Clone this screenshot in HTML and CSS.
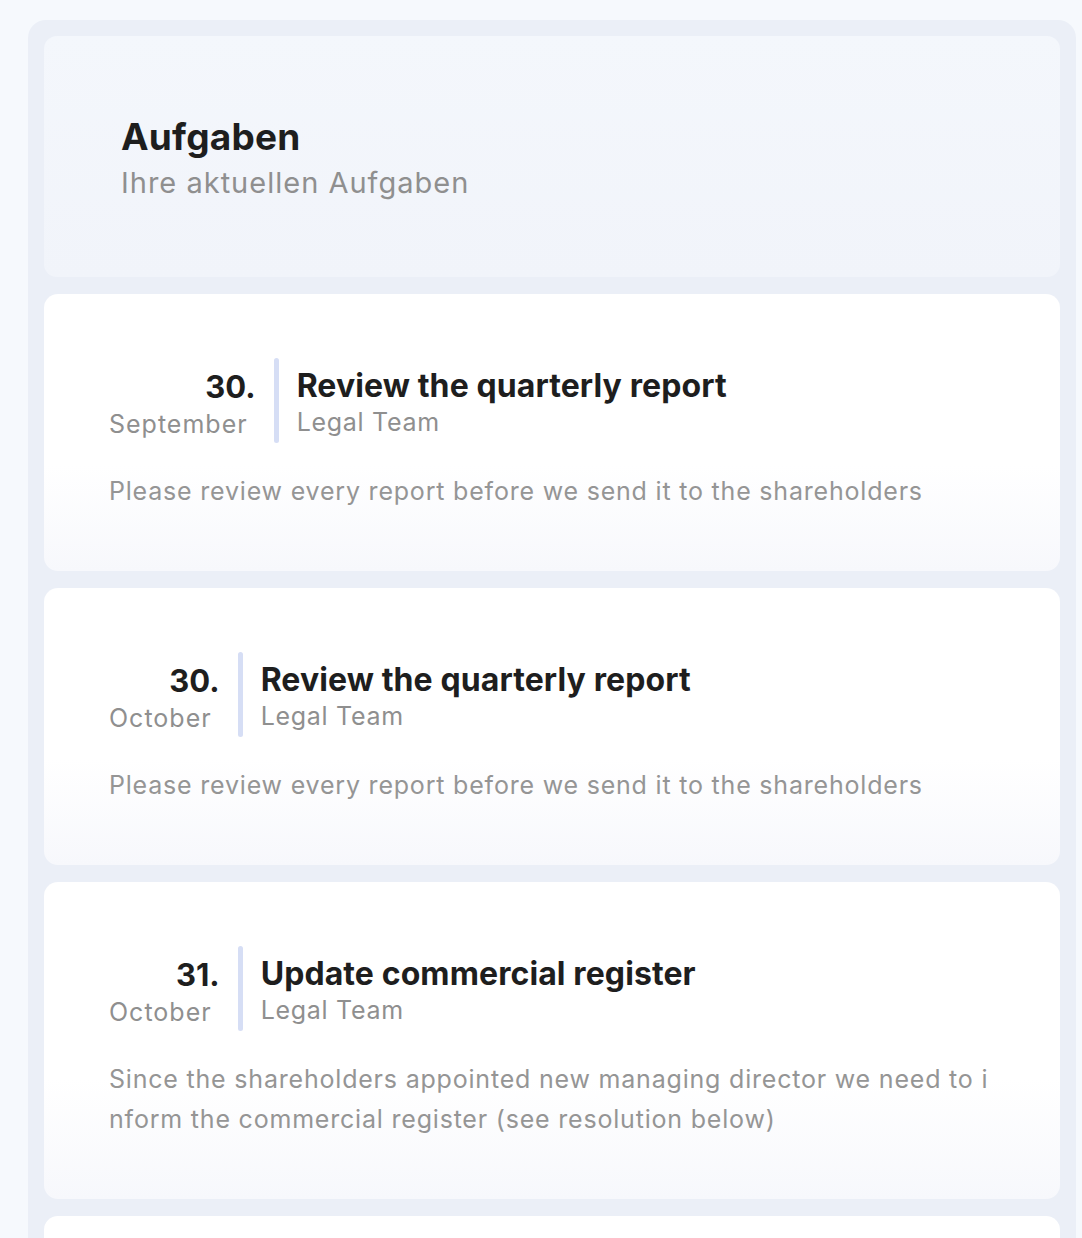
FILE: index.html
```html
<!DOCTYPE html>
<html lang="de">
<head>
<meta charset="utf-8">
<title>Aufgaben</title>
<link rel="stylesheet" href="styles.css">
</head>
<body>
<div class="page">
  <div class="panel">
    <header class="head">
      <h1 class="head-title">Aufgaben</h1>
      <p class="head-sub">Ihre aktuellen Aufgaben</p>
    </header>

    <article class="task">
      <div class="task-top">
        <div class="date">
          <span class="day">30.</span>
          <span class="month">September</span>
        </div>
        <div class="bar"></div>
        <div class="info">
          <span class="title">Review the quarterly report</span>
          <span class="team">Legal Team</span>
        </div>
      </div>
      <p class="desc">Please review every report before we send it to the shareholders</p>
    </article>

    <article class="task">
      <div class="task-top">
        <div class="date">
          <span class="day">30.</span>
          <span class="month">October</span>
        </div>
        <div class="bar"></div>
        <div class="info">
          <span class="title">Review the quarterly report</span>
          <span class="team">Legal Team</span>
        </div>
      </div>
      <p class="desc">Please review every report before we send it to the shareholders</p>
    </article>

    <article class="task">
      <div class="task-top">
        <div class="date">
          <span class="day">31.</span>
          <span class="month">October</span>
        </div>
        <div class="bar"></div>
        <div class="info">
          <span class="title">Update commercial register</span>
          <span class="team">Legal Team</span>
        </div>
      </div>
      <p class="desc">Since the shareholders appointed new managing director we need to inform the commercial register (see resolution below)</p>
    </article>

    <article class="task task-next"></article>
  </div>
</div>
</body>
</html>
```

FILE: styles.css
```css
* { box-sizing: border-box; }

html, body {
  margin: 0;
  padding: 0;
  background: #f6f9fd;
  font-family: Inter, "Noto Sans", "Liberation Sans", sans-serif;
  overflow: hidden;
  height: 100%;
}

.page {
  padding: 20px 6px 0 28px;
}

.panel {
  background: #ebeff7;
  border-radius: 18px 18px 0 0;
  padding: 16px;
  display: flex;
  flex-direction: column;
  gap: 17px;
}

.head {
  height: 241px;
  border-radius: 13px;
  background: linear-gradient(180deg, #f4f7fc 0%, #f1f4fa 100%);
  padding: 5px 77px 0;
  display: flex;
  flex-direction: column;
  justify-content: center;
}

.head-title {
  margin: 0;
  font-size: 37px;
  line-height: 44px;
  font-weight: 700;
  color: #1e1e1e;
  letter-spacing: 0.2px;
}

.head-sub {
  margin: 4px 0 0;
  font-size: 29px;
  line-height: 40px;
  color: #8f8f8f;
  letter-spacing: 1px;
}

.task {
  background: linear-gradient(180deg, #ffffff 0%, #ffffff 62%, #f7f8fc 100%);
  border-radius: 14px;
  padding: 64px 65px 60px;
  display: flex;
  flex-direction: column;
  gap: 28px;
}

.task-next {
  min-height: 277px;
  background: #ffffff;
}

.task-top {
  display: flex;
  align-items: stretch;
}

.date {
  display: flex;
  flex-direction: column;
  justify-content: center;
  padding-top: 6px;
}

.day {
  text-align: right;
  font-size: 31px;
  line-height: 40px;
  font-weight: 700;
  color: #1e1e1e;
}

.month {
  font-size: 25px;
  line-height: 34px;
  color: #8f8f8f;
  padding-right: 8px;
  letter-spacing: 1px;
}

.bar {
  width: 5px;
  height: 85px;
  border-radius: 3px;
  background: #d6def5;
  margin: 0 18px;
  flex: none;
}

.info {
  display: flex;
  flex-direction: column;
  justify-content: center;
  padding-top: 2px;
}

.title {
  font-size: 32px;
  line-height: 40px;
  font-weight: 700;
  color: #1e1e1e;
  letter-spacing: 0.1px;
}

.team {
  font-size: 25px;
  line-height: 32px;
  color: #8f8f8f;
  letter-spacing: 0.7px;
}

.desc {
  margin: 0;
  font-size: 25px;
  line-height: 40px;
  color: #959595;
  letter-spacing: 0.8px;
  word-break: break-all;
}
```
